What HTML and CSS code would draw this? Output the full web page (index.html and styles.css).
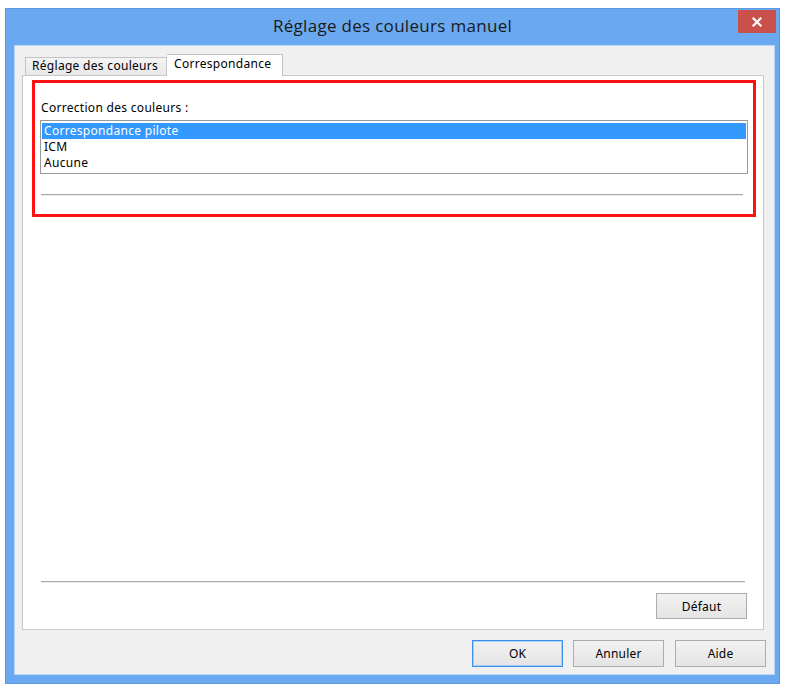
FILE: index.html
```html
<!DOCTYPE html>
<html lang="fr">
<head>
<meta charset="utf-8">
<title>Réglage des couleurs manuel</title>
<link rel="stylesheet" href="styles.css">
</head>
<body>
<div class="window">
  <div class="titlebar">
    <span class="spacer"></span>
    <span class="title">Réglage des couleurs manuel</span>
    <span class="close-wrap"><span class="close">
      <svg width="10" height="10" viewBox="0 0 10 10"><path d="M1.5 1.5 L8.5 8.5 M8.5 1.5 L1.5 8.5" stroke="#fff" stroke-width="2.2" stroke-linecap="square"/></svg>
    </span></span>
  </div>
  <div class="client">
    <div class="tabs">
      <div class="tab">Réglage des couleurs</div>
      <div class="tab active">Correspondance</div>
    </div>
    <div class="panel">
      <div class="highlight">
        <div class="label">Correction des couleurs :</div>
        <div class="listbox">
          <div class="item selected">Correspondance pilote</div>
          <div class="item">ICM</div>
          <div class="item">Aucune</div>
        </div>
        <div class="sep sep-top"></div>
      </div>
      <div class="fill"></div>
      <div class="sep sep-bottom"></div>
      <div class="panel-actions">
        <button class="btn">Défaut</button>
      </div>
    </div>
    <div class="actions">
      <button class="btn default">OK</button>
      <button class="btn">Annuler</button>
      <button class="btn">Aide</button>
    </div>
  </div>
</div>
</body>
</html>
```
FILE: styles.css
```css
html, body {
  margin: 0;
  padding: 0;
  background: #ffffff;
}
body {
  font-family: "Noto Sans", "DejaVu Sans", sans-serif;
  font-size: 12px;
  color: #000000;
}
.window {
  margin: 8px 0 0 5px;
  width: 775px;
  height: 676px;
  background: #6aa9ef;
  display: flex;
  flex-direction: column;
  box-sizing: border-box;
  border: 1px solid #5b9ae0;
}
.titlebar {
  height: 36px;
  display: grid;
  grid-template-columns: 1fr auto 1fr;
  align-items: start;
  flex-shrink: 0;
}
.title {
  font-family: "Open Sans", "Noto Sans", sans-serif;
  font-size: 17px;
  color: #1a1a1a;
  line-height: 20px;
  margin-top: 7px;
  letter-spacing: 0.3px;
}
.close-wrap {
  justify-self: end;
  margin-top: 1px;
  margin-right: 3px;
}
.close {
  display: flex;
  align-items: center;
  justify-content: center;
  width: 38px;
  height: 23px;
  background: #c9504b;
}
.client {
  margin: 0 4px 8px 8px;
  flex: 1;
  background: #f0f0f0;
  border: 1px solid #b8d6f7;
  display: flex;
  flex-direction: column;
  padding: 7px 8px 0 7px;
}
.tabs {
  display: flex;
  align-items: flex-end;
  padding-left: 3px;
  height: 22px;
  position: relative;
  z-index: 1;
}
.tab {
  line-height: 16px;
  padding: 0 4px 0 6px;
  border: 1px solid #c3c3c3;
  border-bottom: none;
  background: linear-gradient(#f4f4f4, #e8e8e8);
  box-sizing: border-box;
  height: 18px;
  letter-spacing: 0.3px;
  width: 142px;
  white-space: nowrap;
}
.tab.active {
  height: 22px;
  width: 116px;
  background: #ffffff;
  border-left: none;
  margin-bottom: -1px;
  line-height: 17px;
  padding-left: 7px;
}
.panel {
  height: 555px;
  box-sizing: border-box;
  background: #ffffff;
  border: 1px solid #c8c8c8;
  margin-right: 2px;
  display: flex;
  flex-direction: column;
}
.highlight {
  margin: 4px 7px 0 9px;
  height: 137px;
  box-sizing: border-box;
  border: 3px solid #ff1010;
  padding: 17px 5px 0 5px;
  display: flex;
  flex-direction: column;
}
.label {
  line-height: 15px;
  height: 15px;
  padding-left: 1px;
  letter-spacing: 0.3px;
}
.listbox {
  margin-top: 5px;
  height: 54px;
  box-sizing: border-box;
  border: 1px solid #9a9a9a;
  padding: 2px 1px;
}
.item {
  height: 16px;
  line-height: 15px;
  padding-left: 2px;
  letter-spacing: 0.3px;
}
.item.selected {
  background: #3399ff;
  color: #ffffff;
}
.sep {
  height: 0;
  border-top: 1px solid #a8a8a8;
  border-bottom: 1px solid #ececec;
}
.sep-top {
  margin: 20px 5px 0 1px;
}
.fill {
  flex: 1;
}
.sep-bottom {
  margin: 0 18px 0 18px;
}
.panel-actions {
  display: flex;
  justify-content: flex-end;
  padding: 10px 16px 10px 0;
}
.btn {
  font-family: "Noto Sans", "DejaVu Sans", sans-serif;
  font-size: 12px;
  color: #000000;
  width: 91px;
  height: 27px;
  border: 1px solid #acacac;
  background: linear-gradient(#f2f2f2, #e4e4e4);
  padding: 0;
  letter-spacing: 0.2px;
}
.panel-actions .btn {
  height: 26px;
}
.btn.default {
  border: 1px solid #3c8fe8;
  box-shadow: inset 0 0 0 1px #a9d0f7;
}
.actions {
  display: flex;
  justify-content: flex-end;
  gap: 10px;
  margin-top: 10px;
}
.actions .btn:last-child {
  margin-left: 1px;
}
```
